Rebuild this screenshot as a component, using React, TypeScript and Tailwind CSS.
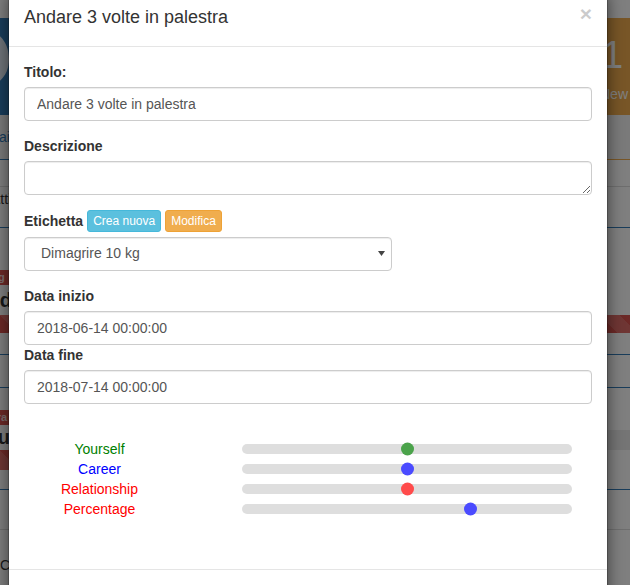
import React from 'react'

const sliders = [
  { label: 'Yourself', text: 'text-[#008000]', thumb: 'bg-[#4ba34b]', value: 50 },
  { label: 'Career', text: 'text-[#0000ff]', thumb: 'bg-[#4b4bff]', value: 50 },
  { label: 'Relationship', text: 'text-[#ff0000]', thumb: 'bg-[#ff4b4b]', value: 50 },
  { label: 'Percentage', text: 'text-[#ff0000]', thumb: 'bg-[#4b4bff]', value: 70 }
]

const labelCls = 'mb-[5px] block text-[14px] font-bold leading-[20px] text-[#333]'
const inputCls =
  'block h-[34px] w-full rounded-[4px] border border-[#ccc] bg-white px-[12px] py-[6px] text-[14px] leading-[20px] text-[#555] shadow-[inset_0_1px_1px_rgba(0,0,0,0.075)] outline-none'
const striped =
  'bg-[#d9534f] bg-[linear-gradient(45deg,rgba(255,255,255,.15)_25%,transparent_25%,transparent_50%,rgba(255,255,255,.15)_50%,rgba(255,255,255,.15)_75%,transparent_75%,transparent)] bg-[length:40px_40px]'

// the dashboard page sitting behind the modal backdrop
const Page = () => (
  <div className="flex flex-col text-[#333]">
    <div className="h-[18px]" />

    {/* stat panels */}
    <div className="flex h-[142px] justify-between">
      <div className="-ml-[200px] flex w-[221px] flex-col border border-[#337ab7]">
        <div className="flex h-[96px] justify-end bg-[#337ab7] pr-[6px] pt-[6px]">
          <svg width="60" height="76" viewBox="0 0 60 76" className="text-[#dfe9f3]">
            <path
              fill="currentColor"
              d="M27 4C43 4 55 16 55 34S43 62 27 62c-4 0-8-1-11-2L4 72l3-13C3 53 0 44 0 34 0 16 12 4 27 4z"
            />
          </svg>
        </div>
        <div className="flex flex-1 items-center justify-end bg-[#f5f5f5] text-[14px] text-[#337ab7]">
          View Details
        </div>
      </div>
      <div className="-mr-[200px] flex w-[236px] flex-col border border-[#f0ad4e]">
        <div className="h-[96px] bg-[#f0ad4e] pl-[7px] pt-[14px] text-white">
          <div className="text-[38px] leading-[44px]">1</div>
          <div className="-ml-[2px] mt-[7px] text-[14px] leading-[20px]">New Tasks!</div>
        </div>
        <div className="flex-1 bg-[#f5f5f5]" />
      </div>
    </div>

    <div className="h-[27px] border-b border-[#ddd]" />
    <div className="h-[41px] border-b border-[#337ab7] pt-[2px]">
      <div className="-ml-[100px] w-[133px] text-right text-[14px] leading-[20px]">Attività</div>
    </div>
    <div className="h-[42px]" />

    {/* first goal card */}
    <div className="flex h-[15px]">
      <span className="-ml-[40px] w-[60px] bg-[#d9534f] pl-[2px] text-[11px] font-bold leading-[15px] text-[#f7dcdc]">
        Jogging
      </span>
    </div>
    <div className="flex h-[30px] items-center">
      <div className="-ml-[80px] w-[92px] text-right text-[20px] font-bold">Mind</div>
    </div>
    <div className={`h-[18px] ${striped}`} />
    <div className="h-[22px] border-b border-[#337ab7]" />
    <div className="h-[33px] border-b border-[#337ab7]" />
    <div className="h-[22px]" />

    {/* second goal card */}
    <div className="flex h-[15px]">
      <span className="-ml-[35px] w-[60px] bg-[#d9534f] text-[11px] font-bold leading-[15px] text-[#f7dcdc]">
        Carriera
      </span>
    </div>
    <div className="flex h-[25px] items-start justify-between">
      <div className="-ml-[60px] w-[70px] text-right text-[20px] font-bold leading-[24px]">Tu</div>
      <div className="mt-[5px] h-[20px] w-[30px] bg-[#ebebeb]" />
    </div>
    <div className="flex h-[20px]">
      <div className={`-ml-[20px] w-[40px] ${striped}`} />
    </div>
    <div className="h-[20px] border-b border-[#337ab7]" />
    <div className="h-[40px] border-b border-[#ddd]" />
    <div className="pt-[25px] text-[14px] leading-[20px]">Chiudi</div>
  </div>
)

const Slider = ({ s }: { s: (typeof sliders)[number] }) => (
  <div className="flex h-[20px] items-center">
    <div className={`w-[151px] text-center text-[14px] leading-[20px] ${s.text}`}>{s.label}</div>
    <div className="relative ml-[67px] h-[10px] w-[330px] rounded-full bg-[#dedede]">
      <span
        className={`absolute top-1/2 h-[13px] w-[13px] -translate-y-1/2 rounded-full ${s.thumb}`}
        style={{ left: `${(s.value / 100) * 317}px` }}
      />
    </div>
  </div>
)

const App: React.FC = () => {
  return (
    <div className="relative h-[585px] w-[630px] overflow-hidden bg-white font-['Liberation_Sans',Arial,sans-serif]">
      <Page />
      <div className="absolute inset-0 bg-black/50" />

      {/* modal */}
      <div className="absolute left-[8px] top-[-11px] w-[600px] rounded-[6px] border border-black/20 bg-white bg-clip-padding shadow-[0_5px_15px_rgba(0,0,0,0.5)]">
        <div className="flex items-start justify-between border-b border-[#e5e5e5] p-[15px]">
          <h4 className="m-0 text-[18px] leading-[25.7px] font-normal text-[#333]">Andare 3 volte in palestra</h4>
          <button className="-mt-[2px] text-[21px] font-bold leading-none text-black opacity-20 [text-shadow:0_1px_0_#fff]">
            ×
          </button>
        </div>

        <div className="p-[15px]">
          <div className="mb-[15px]">
            <label className={labelCls}>Titolo:</label>
            <input className={inputCls} defaultValue="Andare 3 volte in palestra" readOnly />
          </div>

          <div className="mb-[15px]">
            <label className={labelCls}>Descrizione</label>
            <textarea rows={1} className={`${inputCls} resize-y`} />
          </div>

          <div className="mb-[15px]">
            <div className="mb-[5px] flex h-[22px] items-center gap-[4px]">
              <label className="text-[14px] font-bold leading-[20px] text-[#333]">Etichetta</label>
              <span className="rounded-[3px] border border-[#46b8da] bg-[#5bc0de] px-[5px] py-[1px] text-[12px] leading-[18px] text-white">
                Crea nuova
              </span>
              <span className="rounded-[3px] border border-[#eea236] bg-[#f0ad4e] px-[5px] py-[1px] text-[12px] leading-[18px] text-white">
                Modifica
              </span>
            </div>
            <div className="flex h-[34px] w-[368px] items-center justify-between rounded-[4px] border border-[#ccc] bg-white pl-[16px] pr-[6px] text-[14px] text-[#555] shadow-[inset_0_1px_1px_rgba(0,0,0,0.075)]">
              <span>Dimagrire 10 kg</span>
              <svg width="7" height="5" viewBox="0 0 7 5">
                <path d="M0 0h7L3.5 5z" fill="#444" />
              </svg>
            </div>
          </div>

          <label className={labelCls}>Data inizio</label>
          <input className={inputCls} defaultValue="2018-06-14 00:00:00" readOnly />
          <label className={labelCls}>Data fine</label>
          <input className={inputCls} defaultValue="2018-07-14 00:00:00" readOnly />

          <div className="py-[35px]">
            {sliders.map(s => (
              <Slider key={s.label} s={s} />
            ))}
          </div>
        </div>

        <div className="h-[65px] border-t border-[#e5e5e5]" />
      </div>
    </div>
  )
}

export default App
